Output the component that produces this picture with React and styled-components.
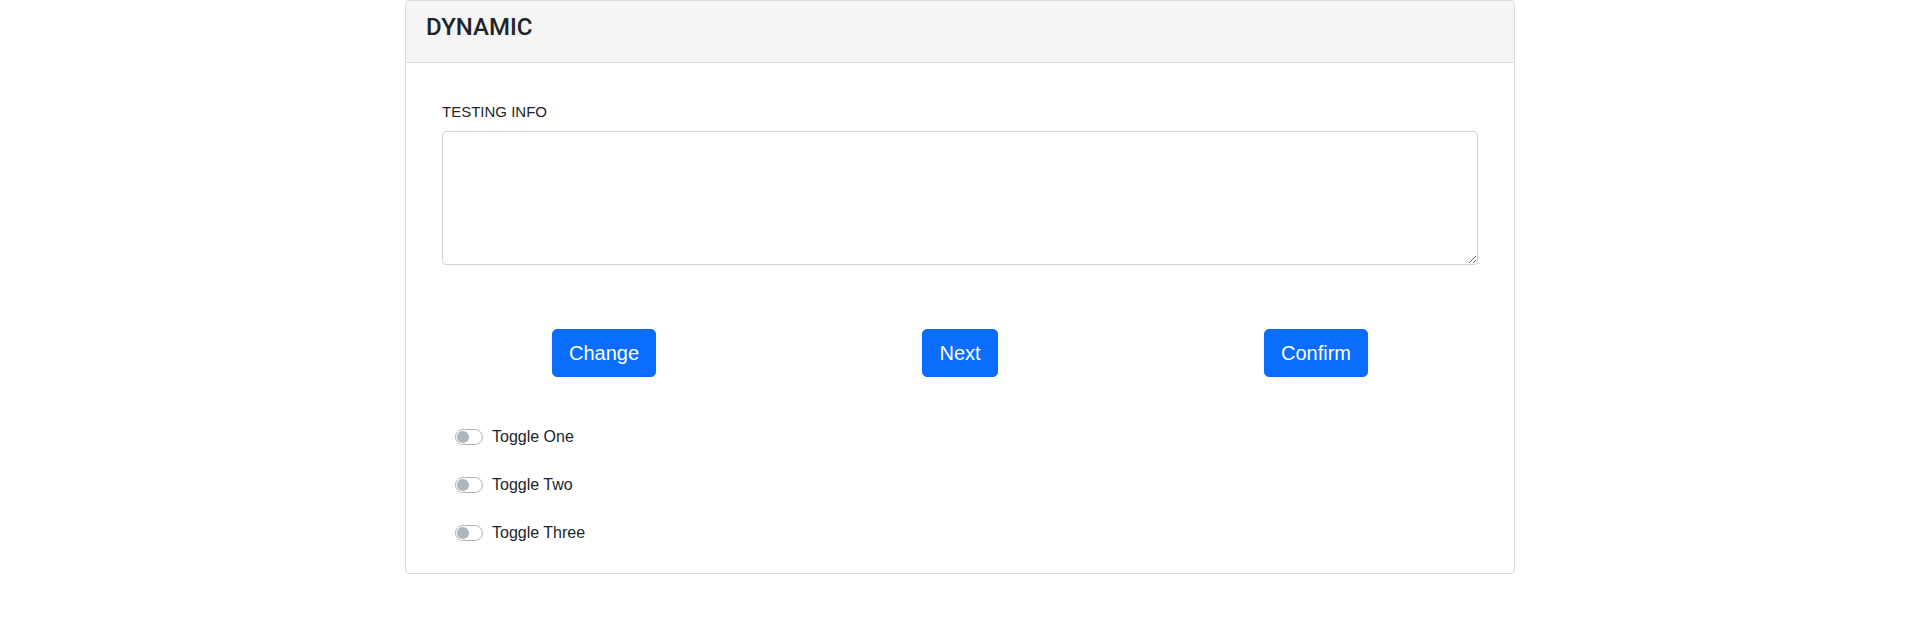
import React, { useState } from 'react';
import styled, { createGlobalStyle } from 'styled-components';

const GlobalStyle = createGlobalStyle`
  html, body {
    margin: 0;
    padding: 0;
    background: #ffffff;
  }

  body {
    font-family: "Liberation Sans", Arial, sans-serif;
    color: #212529;
  }
`;

const Container = styled.div`
  width: 1110px;
  margin: 0 auto;
`;

const Card = styled.div`
  border: 1px solid #d9d9d9;
  border-radius: 4px;
  background: #ffffff;
  overflow: hidden;
`;

const CardHeader = styled.div`
  background: #f5f5f5;
  border-bottom: 1px solid #d9d9d9;
  padding: 12px 20px;
`;

const CardTitle = styled.h4`
  margin: 0 0 8px;
  font-family: Roboto, "Liberation Sans", Arial, sans-serif;
  font-size: 24px;
  font-weight: 500;
  line-height: 29px;
  color: #212529;
`;

const CardBody = styled.div`
  padding: 38px 20px 28px;
`;

const FormGroup = styled.div`
  padding: 0 16px;
`;

const Label = styled.label`
  display: block;
  font-size: 15px;
  line-height: 22px;
  margin-bottom: 8px;
`;

const TextArea = styled.textarea`
  display: block;
  box-sizing: border-box;
  width: 100%;
  height: 134px;
  padding: 6px 12px;
  border: 1px solid #ced4da;
  border-radius: 4px;
  font-family: inherit;
  font-size: 16px;
  resize: vertical;
  outline: none;
`;

const ButtonRow = styled.div`
  display: grid;
  grid-template-columns: repeat(3, 1fr);
  justify-items: center;
  margin-top: 64px;
`;

const Button = styled.button`
  background: #0a6dfd;
  color: #ffffff;
  border: 1px solid #0a6dfd;
  border-radius: 5px;
  padding: 8px 16px;
  font-family: inherit;
  font-size: 20px;
  line-height: 30px;
  cursor: pointer;

  &:hover {
    background: #0b5ed7;
  }
`;

const ToggleList = styled.div`
  display: flex;
  flex-direction: column;
  gap: 24px;
  margin-top: 48px;
  padding-left: 29px;
`;

const ToggleRow = styled.label`
  display: flex;
  align-items: center;
  gap: 9px;
  font-size: 16px;
  line-height: 24px;
  cursor: pointer;
`;

const Track = styled.span`
  position: relative;
  box-sizing: border-box;
  width: 28px;
  height: 16px;
  border: 1px solid ${(p) => (p.$on ? '#0a6dfd' : '#adb5bd')};
  border-radius: 8px;
  background: ${(p) => (p.$on ? '#0a6dfd' : '#ffffff')};

  &::after {
    content: '';
    position: absolute;
    top: 1px;
    left: ${(p) => (p.$on ? '13px' : '1px')};
    width: 12px;
    height: 12px;
    border-radius: 50%;
    background: ${(p) => (p.$on ? '#ffffff' : '#adb5bd')};
  }
`;

const toggles = ['Toggle One', 'Toggle Two', 'Toggle Three'];

const App = () => {
  const [info, setInfo] = useState('');
  const [on, setOn] = useState([false, false, false]);

  const flip = (i) => setOn((prev) => prev.map((v, j) => (j === i ? !v : v)));

  return (
    <Container>
      <GlobalStyle />
      <Card>
        <CardHeader>
          <CardTitle>DYNAMIC</CardTitle>
        </CardHeader>
        <CardBody>
          <FormGroup>
            <Label htmlFor="testing-info">TESTING INFO</Label>
            <TextArea
              id="testing-info"
              value={info}
              onChange={(e) => setInfo(e.target.value)}
            />
          </FormGroup>

          <ButtonRow>
            <div><Button type="button">Change</Button></div>
            <div><Button type="button">Next</Button></div>
            <div><Button type="button">Confirm</Button></div>
          </ButtonRow>

          <ToggleList>
            {toggles.map((name, i) => (
              <ToggleRow key={name} onClick={() => flip(i)}>
                <Track $on={on[i]} />
                {name}
              </ToggleRow>
            ))}
          </ToggleList>
        </CardBody>
      </Card>
    </Container>
  );
};

export default App;
